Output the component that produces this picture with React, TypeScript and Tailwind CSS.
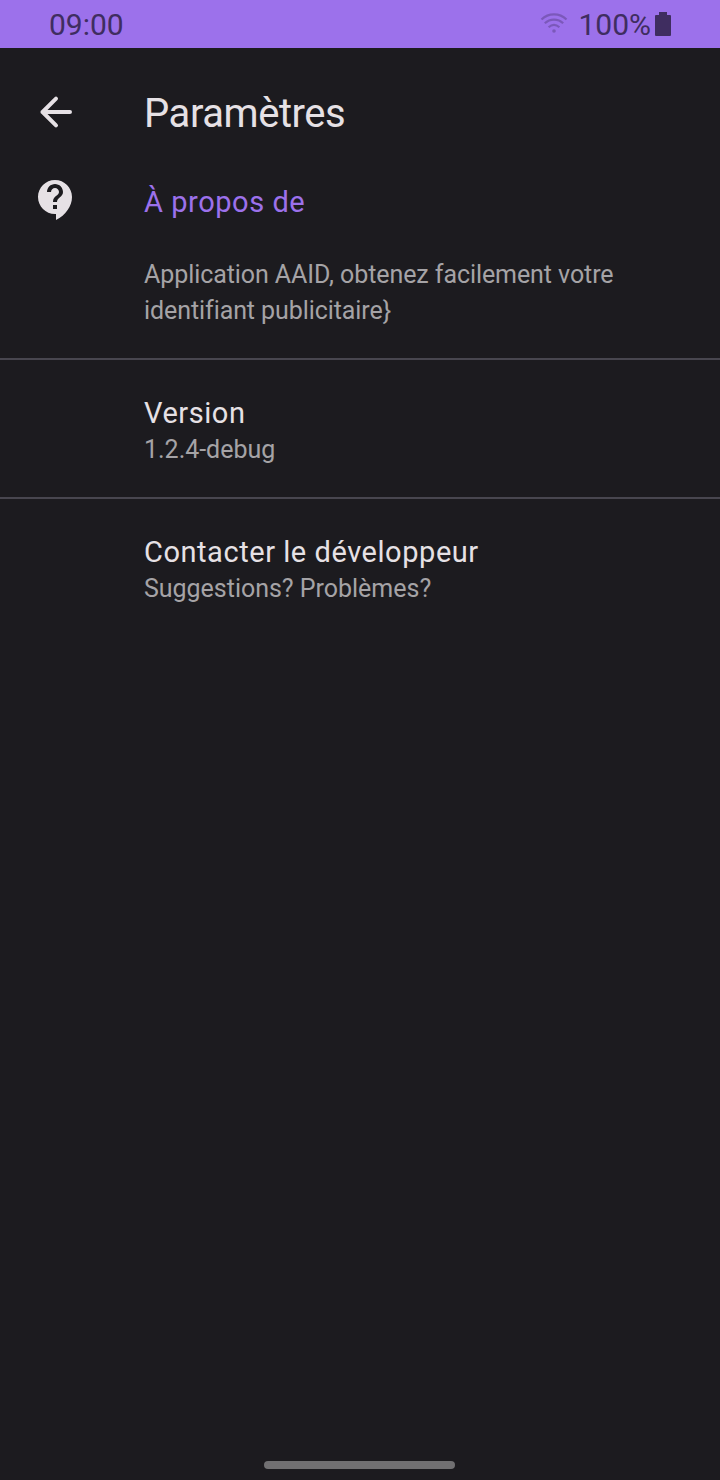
import React from "react";

function StatusBar() {
  return (
    <header className="flex h-12 items-center justify-between bg-[#9c71eb] pl-[49px] pr-[49px] text-[30px] leading-none text-[#3f2d60]">
      <span className="pt-0.5">09:00</span>
      <div className="flex items-center">
        <svg className="mr-2.5 h-6 w-7" viewBox="0 0 28 24" fill="none" stroke="#7b58ba" strokeWidth="2.2">
          <path d="M1.500 7.500C8.500 0.700 19.500 0.700 26.500 7.500M4.800 11.300C10 6.300 18 6.300 23.200 11.300M8.600 15.200C12 12.200 16 12.200 19.400 15.200" />
          <circle cx="14" cy="19" r="1.800" fill="#7b58ba" stroke="none" />
        </svg>
        <span className="pt-0.5">100%</span>
        <svg className="ml-1 h-6 w-4" viewBox="0 0 16 24" fill="currentColor">
          <path d="M4 0h8v3h3q1 0 1 1v19q0 1-1 1H1q-1 0-1-1V4q0-1 1-1h3z" />
        </svg>
      </div>
    </header>
  );
}

function Item({ title, detail }: { title: string; detail: string }) {
  return (
    <section className="h-[139px] border-t-2 border-[#48464f] pl-36 pt-[34px]">
      <h2 className="text-[29px] leading-[38px] tracking-[0.55px] text-[#e6e1e5]">{title}</h2>
      <p className="text-[25px] leading-9 tracking-[-0.02px] text-[#a5a3a6]">{detail}</p>
    </section>
  );
}

export default function App() {
  return (
    <div className="flex h-[1480px] w-[720px] flex-col overflow-hidden bg-[#1c1b1f] font-['Roboto',sans-serif]">
      <StatusBar />
      <main className="flex-1">
        <div className="flex h-32 items-center">
          <button className="flex w-36 pl-8" aria-label="Retour">
            <svg className="h-12 w-12" viewBox="0 0 24 24" fill="none" stroke="#e6e1e5" strokeWidth="2" strokeLinecap="round" strokeLinejoin="round">
              <path d="M19 12H5.200M12 5.300L5.300 12L12 18.700" />
            </svg>
          </button>
          <h1 className="pt-1 text-[40px] leading-[48px] tracking-[-0.45px] text-[#e6e1e5]">Paramètres</h1>
        </div>
        <section className="flex h-[182px]">
          <svg className="ml-8 h-12 w-12" viewBox="0 0 24 24" fill="#e6e1e5">
            <path fillRule="evenodd" d="M11.500 2C6.810 2 3 5.810 3 10.500S6.810 19 11.500 19h.5v3c4.860-2.340 8-7 8-11.500C20 5.810 16.190 2 11.500 2zm1 14.500h-2v-2h2v2zM12.500 13h-2c0-3.250 3-3 3-5 0-1.100-.9-2-2-2s-2 .9-2 2h-2c0-2.210 1.790-4 4-4s4 1.790 4 4c0 2.500-3 2.750-3 5z" />
          </svg>
          <div className="ml-16 pt-[7px]">
            <h2 className="text-[29px] leading-[38px] tracking-[0.55px] text-[#9c71eb]">À propos de</h2>
            <p className="mt-9 w-[520px] text-[25px] leading-9 tracking-[-0.08px] [font-variant-ligatures:common-ligatures] text-[#a5a3a6]">Application AAID, obtenez facilement votre<br />identifiant publicitaire{"}"}</p>
          </div>
        </section>
        <Item title="Version" detail="1.2.4-debug" />
        <Item title="Contacter le développeur" detail="Suggestions? Problèmes?" />
      </main>
      <footer className="flex h-6 items-center justify-center">
        <div className="mb-[6px] mr-px h-2 w-[191px] rounded-full bg-[#717072]" />
      </footer>
    </div>
  );
}
